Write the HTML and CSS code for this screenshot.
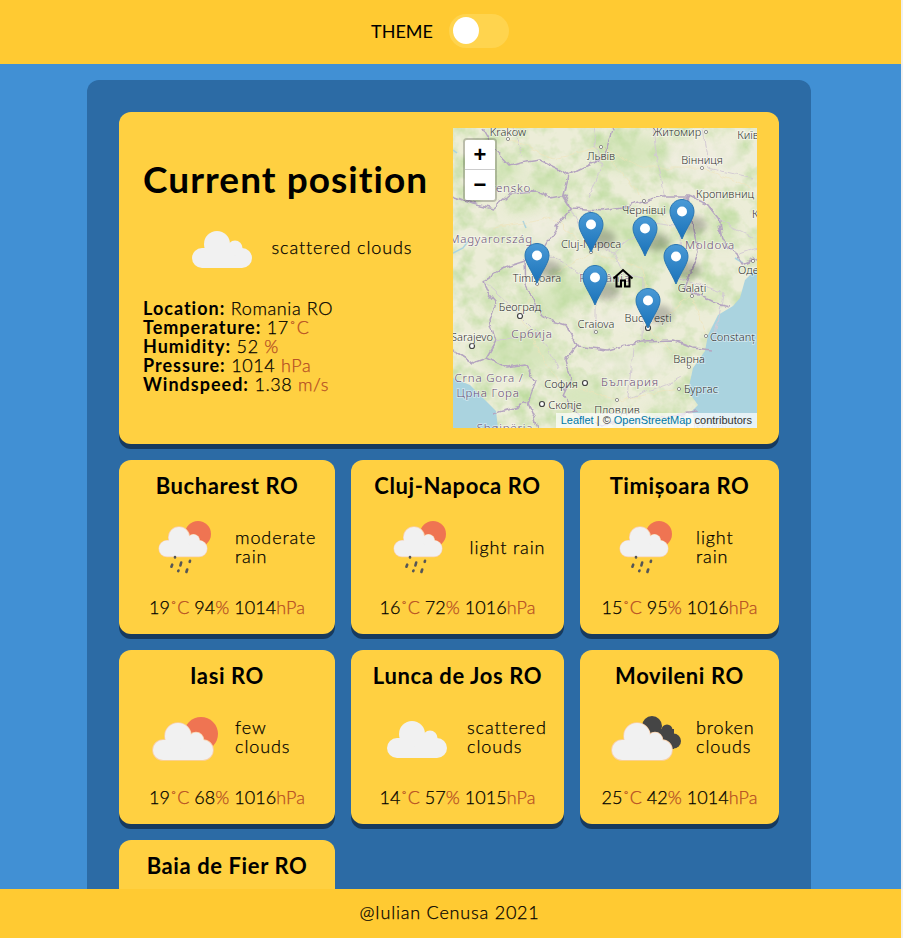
FILE: index.html
```html
<!DOCTYPE html>
<html lang="en">
<head>
<meta charset="utf-8">
<title>Weather</title>
<link rel="stylesheet" href="styles.css">
</head>
<body>
<svg class="defs" aria-hidden="true">
  <defs>
    <g id="cloud">
      <rect x="0" y="17" width="60" height="20" rx="10"/>
      <circle cx="25" cy="13" r="13"/>
      <circle cx="43" cy="17" r="7.5"/>
    </g>
    <g id="rain">
      <circle cx="63" cy="37" r="13" class="sun"/>
      <use href="#cloud" class="halo" transform="translate(24 30) scale(.8)"/>
      <use href="#cloud" class="ice" transform="translate(24 30) scale(.8)"/>
      <path class="drops" d="M40 60v.4M37.200 67.700l-.8 2M46.200 65.500l-.8 3M55 63.800l-.3 1M43.500 73.500l-.3 .6M52.200 72.500l-.8 2.500"/>
    </g>
    <g id="few">
      <circle cx="66" cy="47" r="17" class="sun"/>
      <use href="#cloud" class="halo" transform="translate(18 36)"/>
      <use href="#cloud" class="ice" transform="translate(18 36)"/>
    </g>
    <g id="scattered">
      <use href="#cloud" class="ice" transform="translate(20 34)"/>
    </g>
    <g id="broken">
      <g class="coal">
        <circle cx="56" cy="39" r="10"/>
        <circle cx="71" cy="43" r="5.500"/>
        <circle cx="77.500" cy="54" r="7.500"/>
        <rect x="50" y="42" width="28" height="20"/>
      </g>
      <use href="#cloud" class="halo" transform="translate(16 36)"/>
      <use href="#cloud" class="ice" transform="translate(16 36)"/>
    </g>
    <g id="pin">
      <ellipse cx="24" cy="26" rx="13" ry="9" class="pin-shadow"/>
      <path class="pin-body" d="M12.500 .5C5.800 .5 .5 5.800 .5 12.500C.5 19.500 7 27 12.500 40C18 27 24.500 19.500 24.500 12.500C24.500 5.800 19.200 .5 12.500 .5z"/>
      <circle cx="12.500" cy="12.500" r="5" class="pin-dot"/>
    </g>
    <linearGradient id="pinfill" x1="0" y1="0" x2="0" y2="1">
      <stop offset="0" stop-color="#4a9ad6"/>
      <stop offset="1" stop-color="#1a72b9"/>
    </linearGradient>
    <filter id="soft" x="-30%" y="-30%" width="160%" height="160%"><feGaussianBlur stdDeviation="6"/></filter>
    <filter id="softer" x="-50%" y="-50%" width="200%" height="200%"><feGaussianBlur stdDeviation="3"/></filter>
    <filter id="terrain" x="0" y="0" width="100%" height="100%" color-interpolation-filters="sRGB">
      <feTurbulence type="fractalNoise" baseFrequency=".05" numOctaves="4" seed="7"/>
      <feColorMatrix values="0 0 0 0 .74  0 0 0 0 .86  0 0 0 0 .62  2.000 0 0 0 -.85"/>
    </filter>
    <filter id="wiggle" x="-5%" y="-5%" width="110%" height="110%">
      <feTurbulence type="fractalNoise" baseFrequency=".09" numOctaves="3" seed="3" result="n"/>
      <feDisplacementMap in="SourceGraphic" in2="n" scale="7" xChannelSelector="R" yChannelSelector="G"/>
    </filter>
  </defs>
</svg>

<header class="topbar">
  <span class="theme-label">THEME</span>
  <span class="toggle"><span class="knob"></span></span>
</header>

<main class="stage">
  <div class="panel">
    <section class="hero">
      <div class="hero-info">
        <h1 class="hero-title">Current position</h1>
        <div class="weather weather-hero">
          <svg class="icon" viewBox="0 10 100 80"><use href="#scattered"/></svg>
          <span class="desc">scattered clouds</span>
        </div>
        <ul class="stats">
          <li><b>Location:</b> Romania RO</li>
          <li><b>Temperature:</b> 17<span class="unit">˚C</span></li>
          <li><b>Humidity:</b> 52 <span class="unit">%</span></li>
          <li><b>Pressure:</b> 1014 <span class="unit">hPa</span></li>
          <li><b>Windspeed:</b> 1.38 <span class="unit">m/s</span></li>
        </ul>
      </div>

      <div class="map">
        <svg class="map-art" viewBox="0 0 304 300" width="304" height="300">
          <rect class="land" width="304" height="300"/>
          <g class="greens">
            <ellipse cx="40" cy="40" rx="30" ry="14"/>
            <ellipse cx="100" cy="55" rx="28" ry="10"/>
            <ellipse cx="70" cy="78" rx="18" ry="7"/>
            <ellipse cx="175" cy="25" rx="40" ry="18"/>
            <ellipse cx="160" cy="100" rx="28" ry="18"/>
            <ellipse cx="195" cy="115" rx="18" ry="26"/>
            <ellipse cx="120" cy="160" rx="26" ry="13"/>
            <ellipse cx="100" cy="175" rx="18" ry="18"/>
            <ellipse cx="165" cy="150" rx="32" ry="10"/>
            <ellipse cx="65" cy="225" rx="40" ry="22"/>
            <ellipse cx="130" cy="268" rx="26" ry="14"/>
            <ellipse cx="40" cy="170" rx="12" ry="12"/>
            <ellipse cx="210" cy="285" rx="18" ry="7"/>
            <ellipse cx="270" cy="100" rx="14" ry="18"/>
            <ellipse cx="258" cy="170" rx="14" ry="8"/>
            <ellipse cx="225" cy="225" rx="14" ry="6"/>
          </g>
          <rect class="terrain" width="304" height="300"/>
          <g class="pales">
            <ellipse cx="250" cy="30" rx="40" ry="20"/>
            <ellipse cx="90" cy="105" rx="25" ry="16"/>
            <ellipse cx="185" cy="235" rx="45" ry="8"/>
            <ellipse cx="175" cy="190" rx="40" ry="10"/>
          </g>
          <path class="sea" d="M304 140L292 152L287 170L280 178L265 187L255 207L252 223L240 240L235 263L245 277L239 283L243 300L304 300z"/>
          <path class="sea" d="M0 250L17 257L33 273L43 283L45 300L0 300z"/>
          <path class="river" d="M0 125L10 120L16 112M70 93L73 100M0 22L4 25M282 130L290 135"/>
          <g class="roads">
            <path d="M55 11L100 30L148 19L190 40L249 40L300 60"/>
            <path d="M84 156L138 124L190 140L195 200L239 168L253 208"/>
            <path d="M67 188L84 156M67 188L105 255L164 272L226 261M195 200L236 239"/>
            <path d="M191 73L229 110L239 168M148 19L191 73M138 124L100 90L40 100"/>
          </g>
          <g class="borders-thin">
            <path d="M140 0L148 40L135 70M200 0L205 40L212 70M250 0L255 40L300 50M60 0L70 30"/>
            <path d="M118 80L130 105L160 125L170 145L190 150L189 213M90 123L120 140L143 170L143 205M160 125L200 95L235 100"/>
            <path d="M227 100L228 150L270 165L262 215M43 213L85 205L105 240M30 153L70 190L85 205M180 220L175 270L230 250"/>
            <path d="M260 90L300 110M284 127L304 120"/>
          </g>
          <g class="borders">
            <path d="M0 68L20 75L40 80L58 65L83 63L97 70L113 67L118 80"/>
            <path d="M30 0L43 23L57 38L67 35L87 32L107 42L115 47L150 30L160 0"/>
            <path d="M115 47L110 67L118 80L150 82L175 78L209 68L235 68L255 77L265 90L269 113L284 127L289 137L304 130"/>
            <path d="M118 80L103 100L90 123L72 133L50 140L30 153L33 163L43 175L37 193L43 213L33 230L53 240L72 237L83 253L75 275L85 300"/>
            <path d="M72 133L73 158L90 190L113 197L123 218L155 222L189 213L219 212L239 220L259 222"/>
            <path d="M235 68L240 100L245 125L232 160L262 175L277 178"/>
            <path d="M123 218L113 232L118 250L110 268L130 290L150 296L205 290L245 285"/>
            <path d="M0 222L20 235L33 230M75 275L40 285"/>
          </g>
          <g class="marks">
            <circle cx="55" cy="11" r="1.600"/>
            <circle cx="253" cy="4" r="1.600"/>
            <circle cx="148" cy="19" r="1.600"/>
            <circle cx="249" cy="40" r="1.600"/>
            <circle cx="191" cy="73" r="1.600"/>
            <circle cx="138" cy="124" r="1.600"/>
            <circle cx="84" cy="156" r="1.600"/>
            <circle cx="300" cy="133" r="1.600"/>
            <circle cx="239" cy="168" r="1.600"/>
            <circle cx="143" cy="204" r="1.600"/>
            <circle cx="253" cy="208" r="1.600"/>
            <circle cx="236" cy="239" r="1.600"/>
            <circle cx="226" cy="261" r="1.600"/>
            <circle cx="164" cy="272" r="1.600"/>
          </g>
          <g class="rings">
            <circle cx="67" cy="188" r="2.500"/>
            <circle cx="195" cy="200" r="2.500"/>
            <circle cx="19" cy="218" r="2.500"/>
            <circle cx="132" cy="255" r="2.500"/>
            <circle cx="89" cy="276" r="2.500"/>
          </g>
          <g class="places">
            <text x="55" y="8">Krakow</text>
            <text x="224" y="8">Житомир</text>
            <text x="295" y="11">Київ</text>
            <text x="148" y="32">Львів</text>
            <text x="249" y="36">Вінниця</text>
            <text x="243" y="70" class="start">Кропивниц</text>
            <text x="191" y="86">Чернівці</text>
            <text x="299" y="90" class="start">К</text>
            <text x="138" y="120">Cluj-Napoca</text>
            <text x="84" y="154">Timișoara</text>
            <text x="285" y="146" class="start">Оде</text>
            <text x="239" y="164">Galați</text>
            <text x="67" y="183">Београд</text>
            <text x="143" y="200">Craiova</text>
            <text x="195" y="194">București</text>
            <text x="19" y="213">Sarajevo</text>
            <text x="257" y="213" class="start">Constanț</text>
            <text x="236" y="235">Варна</text>
            <text x="108" y="260">София</text>
            <text x="248" y="265">Бургас</text>
            <text x="112" y="281">Скопје</text>
            <text x="164" y="286">Пловдив</text>
            <text x="260" y="303" class="faint">Istanbul</text>
          </g>
          <g class="countries">
            <text x="78" y="64" class="end">Slovensko</text>
            <text x="80" y="115" class="end">Magyarország</text>
            <text x="152" y="154">România</text>
            <text x="257" y="121">Moldova</text>
            <text x="79" y="210">Србија</text>
            <text x="36" y="254">Crna Gora /</text>
            <text x="35" y="269">Црна Гора</text>
            <text x="177" y="258">България</text>
            <text x="52" y="304">Shqipëria</text>
          </g>
          <use href="#pin" transform="translate(71.500 115)"/>
          <use href="#pin" transform="translate(125.500 84)"/>
          <use href="#pin" transform="translate(179.500 88)"/>
          <use href="#pin" transform="translate(216.500 71)"/>
          <use href="#pin" transform="translate(210.500 116)"/>
          <use href="#pin" transform="translate(129.500 137)"/>
          <use href="#pin" transform="translate(182.500 160)"/>
          <path class="home" d="M160.500 150.500L170 142L179.500 150.500M163.500 148.500V158.500H168V152.500H172V158.500H176.500V148.500"/>
        </svg>
        <div class="zoom-box">
          <span class="zoom-btn">+</span>
          <span class="zoom-btn">−</span>
        </div>
        <div class="attribution"><a class="attr-link">Leaflet</a> | © <a class="attr-link">OpenStreetMap</a> contributors</div>
      </div>
    </section>

    <section class="cities">
      <article class="city">
        <h2 class="city-name">Bucharest RO</h2>
        <div class="weather">
          <svg class="icon" viewBox="0 10 100 80"><use href="#rain"/></svg>
          <span class="desc">moderate rain</span>
        </div>
        <p class="city-line">19<span class="unit">˚C</span> 94<span class="unit">%</span> 1014<span class="unit">hPa</span></p>
      </article>
      <article class="city">
        <h2 class="city-name">Cluj-Napoca RO</h2>
        <div class="weather">
          <svg class="icon" viewBox="0 10 100 80"><use href="#rain"/></svg>
          <span class="desc">light rain</span>
        </div>
        <p class="city-line">16<span class="unit">˚C</span> 72<span class="unit">%</span> 1016<span class="unit">hPa</span></p>
      </article>
      <article class="city">
        <h2 class="city-name">Timișoara RO</h2>
        <div class="weather">
          <svg class="icon" viewBox="0 10 100 80"><use href="#rain"/></svg>
          <span class="desc">light rain</span>
        </div>
        <p class="city-line">15<span class="unit">˚C</span> 95<span class="unit">%</span> 1016<span class="unit">hPa</span></p>
      </article>
      <article class="city">
        <h2 class="city-name">Iasi RO</h2>
        <div class="weather">
          <svg class="icon" viewBox="0 10 100 80"><use href="#few"/></svg>
          <span class="desc">few clouds</span>
        </div>
        <p class="city-line">19<span class="unit">˚C</span> 68<span class="unit">%</span> 1016<span class="unit">hPa</span></p>
      </article>
      <article class="city">
        <h2 class="city-name">Lunca de Jos RO</h2>
        <div class="weather">
          <svg class="icon" viewBox="0 10 100 80"><use href="#scattered"/></svg>
          <span class="desc">scattered clouds</span>
        </div>
        <p class="city-line">14<span class="unit">˚C</span> 57<span class="unit">%</span> 1015<span class="unit">hPa</span></p>
      </article>
      <article class="city">
        <h2 class="city-name">Movileni RO</h2>
        <div class="weather">
          <svg class="icon" viewBox="0 10 100 80"><use href="#broken"/></svg>
          <span class="desc">broken clouds</span>
        </div>
        <p class="city-line">25<span class="unit">˚C</span> 42<span class="unit">%</span> 1014<span class="unit">hPa</span></p>
      </article>
      <article class="city">
        <h2 class="city-name">Baia de Fier RO</h2>
        <div class="weather">
          <svg class="icon" viewBox="0 10 100 80"><use href="#scattered"/></svg>
          <span class="desc">scattered clouds</span>
        </div>
        <p class="city-line">17<span class="unit">˚C</span> 60<span class="unit">%</span> 1016<span class="unit">hPa</span></p>
      </article>
    </section>
  </div>
</main>

<footer class="footer">@Iulian Cenusa 2021</footer>
</body>
</html>
```

FILE: styles.css
```css
* { box-sizing: border-box; }

html {
  height: 100%;
  background: #f1f1f1;
  overflow: hidden;
}

body {
  margin: 0;
  width: 901px;
  height: 938px;
  display: flex;
  flex-direction: column;
  overflow: hidden;
  font-family: "Lato", "Noto Sans", sans-serif;
  font-weight: 300;
  color: #000;
  background: #4190d4;
}

.defs { width: 0; height: 0; position: absolute; }

.ice { fill: #f1f1f1; }
.halo { fill: #f9cfa8; stroke: #f9cfa8; stroke-width: 1.600; }
.sun { fill: #ef7452; }
.coal { fill: #454545; }
.drops { stroke: #565656; stroke-width: 2.600; stroke-linecap: round; fill: none; }

/* top bar */
.topbar {
  flex: none;
  height: 64px;
  display: flex;
  align-items: center;
  justify-content: center;
  gap: 16px;
  padding: 0 21px 2px 0;
  background: #ffca32;
}

.theme-label {
  font-size: 18px;
  font-weight: 400;
}

.toggle {
  width: 60px;
  height: 34px;
  padding: 3px 4px;
  border-radius: 17px;
  background: #ffd44e;
}

.knob {
  display: block;
  width: 26px;
  height: 27px;
  border-radius: 50%;
  background: #fff;
}

/* main */
.stage {
  flex: 1;
  min-height: 0;
  overflow: hidden;
  padding: 16px 0 0 87px;
}

.panel {
  width: 724px;
  padding: 32px;
  border-radius: 12px;
  background: #2c6ba5;
}

.hero {
  height: 332px;
  display: flex;
  justify-content: space-between;
  padding: 16px 22px 16px 24px;
  border-radius: 12px;
  background: #ffd041;
  box-shadow: 0 5px 0 #173a5e;
}

.hero-info { width: 298px; }

.hero-title {
  margin: 29px 0 0;
  font-size: 37px;
  line-height: 44px;
  font-weight: 700;
  letter-spacing: 1.050px;
  white-space: nowrap;
}

.weather {
  height: 80px;
  display: flex;
  align-items: center;
  justify-content: center;
  margin-top: 5px;
}

.weather-hero { margin-top: 6px; }

.icon { flex: none; width: 100px; height: 80px; }

.desc {
  font-size: 18px;
  line-height: 19px;
  letter-spacing: .9px;
  -webkit-text-stroke: .25px currentColor;
}

.stats {
  margin: 12px 0 0;
  padding: 0;
  list-style: none;
  font-size: 18px;
  line-height: 19px;
  letter-spacing: .6px;
  -webkit-text-stroke: .25px currentColor;
}

.stats b {
  font-weight: 700;
  letter-spacing: 1px;
  -webkit-text-stroke: 0;
}

.unit { color: #b54d24; }

/* map */
.map {
  position: relative;
  flex: none;
  width: 304px;
  height: 300px;
  overflow: hidden;
}

.map-art { display: block; }

.land { fill: #ecedd8; }
.greens { fill: #cfe3b3; filter: url(#soft); opacity: .7; }
.terrain { filter: url(#terrain); }
.pales { fill: #f1eee2; filter: url(#soft); opacity: .7; }
.sea { fill: #aad3df; }
.river { fill: none; stroke: #aad3df; stroke-width: 1.500; }
.roads { fill: none; stroke: #f1e2b8; stroke-width: .8; opacity: .7; filter: url(#wiggle); }
.borders-thin { fill: none; stroke: #d3c8d4; stroke-width: .9; filter: url(#wiggle); }
.borders { fill: none; stroke: #b5a5c0; stroke-width: 1.500; stroke-linejoin: round; filter: url(#wiggle); }
.marks { fill: #fff; stroke: #777; stroke-width: .8; }
.rings { fill: #fff; stroke: #444; stroke-width: 1.200; }

.places text {
  font-family: "Noto Sans", sans-serif;
  font-size: 11px;
  fill: #333;
  text-anchor: middle;
  stroke: rgba(255, 255, 255, .4);
  stroke-width: 2px;
  paint-order: stroke;
}

.places .start { text-anchor: start; }
.places .faint { fill: #a5a5a5; }

.countries text {
  font-family: "Noto Sans", sans-serif;
  font-size: 11.500px;
  letter-spacing: .8px;
  fill: #6c5079;
  text-anchor: middle;
  stroke: rgba(255, 255, 255, .4);
  stroke-width: 2px;
  paint-order: stroke;
}

.countries .end { text-anchor: end; }

.pin-shadow { fill: #000; opacity: .22; filter: url(#softer); }
.pin-body { fill: url(#pinfill); stroke: #2a76b2; stroke-width: 1; }
.pin-dot { fill: #fff; }

.home { fill: none; stroke: #000; stroke-width: 2; stroke-linejoin: miter; }

.zoom-box {
  position: absolute;
  top: 10px;
  left: 10px;
  width: 34px;
  display: flex;
  flex-direction: column;
  border: 2px solid rgba(0, 0, 0, .2);
  border-radius: 4px;
  background-clip: padding-box;
}

.zoom-btn {
  height: 30px;
  display: flex;
  align-items: center;
  justify-content: center;
  background: #fff;
  font: 700 22px/30px "Liberation Sans", sans-serif;
  color: #000;
}

.zoom-btn:first-child {
  border-bottom: 1px solid #ccc;
  border-radius: 2px 2px 0 0;
}

.zoom-btn:last-child { border-radius: 0 0 2px 2px; }

.attribution {
  position: absolute;
  right: 0;
  bottom: 0;
  height: 15px;
  padding: 0 5px;
  font: 400 11px/15px "Liberation Sans", sans-serif;
  color: #333;
  background: rgba(255, 255, 255, .7);
  white-space: nowrap;
}

.attr-link { color: #0078a8; }

/* city cards */
.cities {
  display: grid;
  grid-template-columns: 216px 213px 199px;
  grid-auto-rows: 174px;
  gap: 16px;
  margin-top: 16px;
}

.city {
  padding: 10px 16px 0;
  border-radius: 12px;
  background: #ffd041;
  box-shadow: 0 5px 0 #173a5e;
}

.city-name {
  margin: 0;
  height: 32px;
  font-size: 22px;
  line-height: 32px;
  font-weight: 700;
  letter-spacing: .6px;
  text-align: center;
  white-space: nowrap;
}

.city-line {
  margin: 10px 0 0;
  font-size: 18px;
  line-height: 20px;
  letter-spacing: .05px;
  text-align: center;
  white-space: nowrap;
  -webkit-text-stroke: .25px currentColor;
}

.footer {
  flex: none;
  height: 49px;
  display: flex;
  align-items: center;
  justify-content: center;
  padding: 0 2px 4px 0;
  font-size: 18px;
  letter-spacing: .8px;
  -webkit-text-stroke: .25px currentColor;
  background: #ffca32;
}
```
